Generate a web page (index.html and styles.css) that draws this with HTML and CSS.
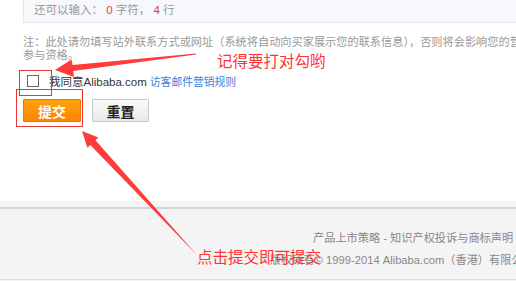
FILE: index.html
```html
<!DOCTYPE html>
<html>
  <head>
    <meta charset="UTF-8" />
    <title>留言提交</title>
    <link rel="stylesheet" href="styles.css">
  </head>
  <body>
    <div class="page">
      <div class="form">
        <div class="counter">
          还可以输入： <span class="num">0</span> 字符， <span class="num">4</span> 行
        </div>

        <p class="note">
          注：此处请勿填写站外联系方式或网址（系统将自动向买家展示您的联系信息），否则将会影响您的营销<br>
          参与资格。
        </p>

        <label class="agree">
          <span class="checkbox"></span>
          <span class="agree-text">我同意Alibaba.com</span>
          <a class="rule-link" href="#">访客邮件营销规则</a>
        </label>

        <div class="actions">
          <button class="btn btn-submit">提交</button>
          <button class="btn btn-reset">重置</button>
        </div>
      </div>

      <footer class="footer">
        <div class="footer-inner">
          <p class="footer-links">产品上市策略 - 知识产权投诉与商标声明 - 隐私政策</p>
          <p class="footer-copy">版权所有© 1999-2014 Alibaba.com（香港）有限公司</p>
        </div>
      </footer>

      <!-- screenshot annotations -->
      <svg class="marks" viewBox="0 0 516 281" aria-hidden="true">
        <rect x="19.5" y="70.5" width="32" height="25" fill="none" stroke="#ee3333" stroke-width="1"></rect>
        <rect x="16.5" y="89.5" width="66" height="37" fill="none" stroke="#ee3333" stroke-width="1"></rect>
        <polygon fill="#ff3b3b"
          points="55,70 71.5,59.5 72.6,65 195.9,53.4 196.1,54.6 73.2,71 74,77"></polygon>
        <polygon fill="#ff3b3b"
          points="82,131 98.4,137.6 95.5,140.3 196.3,254.3 195.7,253.7 90.3,145.1 87.4,147.8"></polygon>
      </svg>
      <span class="tip tip-check">记得要打对勾哟</span>
      <span class="tip tip-submit">点击提交即可提交</span>
    </div>
  </body>
</html>
```

FILE: styles.css
```css
body {
  margin: 0;
  background-color: #ffffff;
  font-family: "Liberation Sans", "Noto Sans CJK SC", sans-serif;
  font-size: 12px;
  color: #333;
}

.page {
  position: relative;
  width: 516px;
  height: 281px;
  overflow: hidden;
}

.form {
  height: 201px;
  padding-left: 23px;
}

.counter {
  height: 22px;
  line-height: 21px;
  padding-left: 10px;
  background-color: #f7f8fb;
  border-left: 1px solid #e3e6ee;
  border-bottom: 1px solid #e3e6ee;
  font-size: 11.5px;
  color: #999;
  white-space: nowrap;
}

.counter .num {
  color: #e4393c;
}

.note {
  margin: 13px 0 0;
  font-size: 11.2px;
  line-height: 13px;
  color: #999;
  white-space: nowrap;
}

.agree {
  display: flex;
  align-items: center;
  height: 16px;
  margin-top: 11px;
  padding-left: 4px;
  white-space: nowrap;
}

.checkbox {
  width: 10px;
  height: 10px;
  border: 1px solid #666;
  background-color: #fff;
  margin-right: 10px;
}

.agree-text {
  color: #333;
  font-size: 11.5px;
}

.rule-link {
  margin-left: 3px;
  color: #3c7ed8;
  text-decoration: none;
  font-size: 10.8px;
}

.actions {
  display: flex;
  gap: 11px;
  margin-top: 10px;
}

.btn {
  height: 23px;
  padding: 0;
  font-family: "Noto Sans CJK SC", sans-serif;
  font-size: 14px;
  font-weight: bold;
  line-height: 20px;
  border-radius: 1px;
  cursor: pointer;
}

.btn-submit {
  width: 58px;
  color: #fff;
  background: linear-gradient(#ffa20c, #ff8400);
  border: 1px solid #e97400;
}

.btn-reset {
  width: 57px;
  color: #222;
  background: linear-gradient(#fafafa, #e8e8e8);
  border: 1px solid #c9c9c9;
}

.footer {
  height: 80px;
  padding-top: 6px;
  background-color: #f4f4f4;
  box-sizing: border-box;
}

.footer-inner {
  height: 70px;
  border-top: 2px solid #d6d6d6;
  border-bottom: 1px solid #dcdcdc;
  font-size: 11.2px;
  color: #888;
  white-space: nowrap;
}

.footer-links {
  margin: 21px 0 0 313px;
  line-height: 16px;
}

.footer-copy {
  margin: 6px 0 0 270px;
  line-height: 16px;
}

.marks {
  position: absolute;
  left: 0;
  top: 0;
  width: 516px;
  height: 281px;
}

.tip {
  position: absolute;
  color: #ff3333;
  font-family: "Noto Sans CJK SC", sans-serif;
  font-size: 15.5px;
  line-height: 18px;
  white-space: nowrap;
}

.tip-check {
  left: 217px;
  top: 51px;
}

.tip-submit {
  left: 197px;
  top: 247px;
}
```
